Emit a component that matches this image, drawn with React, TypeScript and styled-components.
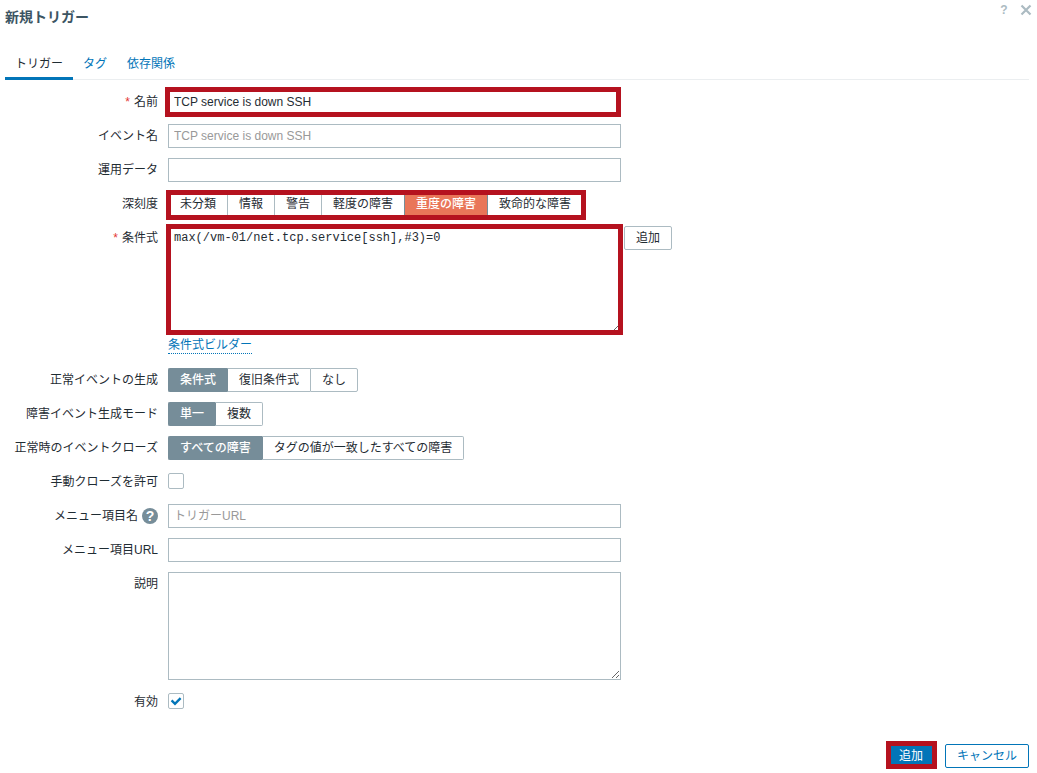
import React, { useState } from 'react';
import styled, { createGlobalStyle, css } from 'styled-components';

const color = {
  text: '#1f2c33',
  title: '#3c5563',
  link: '#0275b8',
  border: '#acbbc2',
  slate: '#768d99',
  high: '#e97659',
  marker: '#b5121f',
  muted: '#999999',
};

const GlobalStyle = createGlobalStyle`
  *, *::before, *::after { box-sizing: border-box; }
  body {
    margin: 0;
    background: #ffffff;
    color: ${color.text};
    font: 12px/24px "Liberation Sans", "Noto Sans CJK JP", sans-serif;
  }
  button, input, textarea { font: inherit; color: inherit; }
`;

const Dialog = styled.form`
  display: flex;
  flex-direction: column;
  min-height: 100vh;
  padding: 0 8px 5px 5px;
`;

const Header = styled.header`
  display: flex;
  justify-content: space-between;
  align-items: flex-start;
  height: 48px;
`;

const Title = styled.h1`
  margin: 5px 0 0;
  font-size: 14px;
  line-height: 24px;
  font-weight: bold;
  color: ${color.title};
`;

const HeaderActions = styled.div`
  display: flex;
  gap: 10px;
  padding-top: 4px;
  margin-right: -3px;
`;

const IconButton = styled.button`
  display: flex;
  align-items: center;
  justify-content: center;
  width: 12px;
  height: 12px;
  padding: 0;
  border: 0;
  background: none;
  font-size: 12px;
  line-height: 12px;
  font-weight: bold;
  color: ${color.border};
`;

const TabList = styled.nav`
  display: flex;
  height: 32px;
  border-bottom: 1px solid #ebeef0;
`;

const Tab = styled.a<{ $active?: boolean }>`
  height: 32px;
  padding: 4px 10px 0;
  text-decoration: none;
  color: ${(p) => (p.$active ? color.text : color.link)};
  border-bottom: 3px solid ${(p) => (p.$active ? color.link : 'transparent')};
`;

const Fields = styled.div`
  display: grid;
  grid-template-columns: 153px minmax(0, 1fr);
  gap: 10px;
  padding-top: 10px;
`;

const LabelCell = styled.div`
  display: flex;
  justify-content: flex-end;
  align-items: center;
  gap: 4px;
  height: 24px;
  white-space: nowrap;
`;

const Required = styled.span`
  color: #e33734;
`;

const Control = styled.div`
  display: flex;
  align-items: flex-start;
  gap: 3px;
  min-width: 0;
`;

const HelpBadge = styled.button`
  width: 16px;
  height: 16px;
  padding: 0;
  border: 0;
  border-radius: 50%;
  background: ${color.slate};
  color: #ffffff;
  font-size: 14px;
  line-height: 16px;
  font-weight: bold;
`;

const Marker = styled.div<{ $edges: string; $grow?: boolean }>`
  position: relative;
  display: flex;
  ${(p) => p.$grow && css`flex: 0 1 453px;`}
  &::after {
    content: '';
    position: absolute;
    inset: ${(p) => p.$edges};
    border: 5px solid ${color.marker};
    pointer-events: none;
  }
`;

const field = css`
  display: block;
  width: 100%;
  max-width: 453px;
  margin: 0;
  border: 1px solid ${color.border};
  border-radius: 0;
  background: #ffffff;
  outline: 0;
  &::placeholder { color: ${color.muted}; opacity: 1; }
`;

const TextInput = styled.input`
  ${field}
  height: 24px;
  padding: 0 5px;
`;

const TextArea = styled.textarea<{ $mono?: boolean }>`
  ${field}
  height: 108px;
  padding: 4px 5px;
  line-height: 14px;
  ${(p) => p.$mono && css`font-family: "Liberation Mono", monospace;`}
`;

const Button = styled.button<{ $kind?: 'primary' | 'outline' }>`
  height: 24px;
  padding: 0 11px;
  line-height: 22px;
  border-radius: 2px;
  white-space: nowrap;
  border: 1px solid ${(p) => (p.$kind ? color.link : color.border)};
  background: ${(p) => (p.$kind === 'primary' ? color.link : '#ffffff')};
  color: ${(p) =>
    p.$kind === 'primary' ? '#ffffff' : p.$kind ? color.link : color.text};
`;

const BuilderLink = styled.a`
  display: inline-block;
  margin: 3px 0 4px;
  line-height: 16px;
  color: ${color.link};
  text-decoration: none;
  border-bottom: 1px dotted ${color.link};
`;

const Stack = styled.div`
  min-width: 0;
`;

const Segments = styled.div`
  display: flex;
`;

const Segment = styled.label<{ $accent: string }>`
  position: relative;
  height: 24px;
  padding: 0 11px;
  line-height: 22px;
  white-space: nowrap;
  border: 1px solid ${color.border};
  border-right-width: 0;
  &:first-child { border-radius: 2px 0 0 2px; }
  &:last-child { border-radius: 0 2px 2px 0; border-right-width: 1px; }
  &:has(input:checked) {
    background: ${(p) => p.$accent};
    border-color: ${color.slate};
    color: #ffffff;
    font-weight: 500;
  }
  &:has(input:checked) + & { border-left-color: ${(p) => p.$accent}; }
`;

const SegmentRadio = styled.input`
  position: absolute;
  inset: 0;
  margin: 0;
  opacity: 0;
`;

const CheckWrap = styled.span`
  position: relative;
  display: block;
  width: 16px;
  height: 16px;
  margin-top: 3px;
  svg {
    position: absolute;
    inset: 0;
    pointer-events: none;
  }
`;

const CheckInput = styled.input`
  appearance: none;
  display: block;
  width: 16px;
  height: 16px;
  margin: 0;
  border: 1px solid ${color.border};
  border-radius: 2px;
  background: #ffffff;
`;

const Footer = styled.footer`
  display: flex;
  justify-content: flex-end;
  gap: 10px;
  margin-top: auto;
  padding-top: 30px;
`;

function Label({ id, text, required, help }: { id: string; text: string; required?: boolean; help?: boolean }) {
  return (
    <LabelCell>
      {required && <Required>*</Required>}
      <label htmlFor={id} id={`${id}-label`}>{text}</label>
      {help && <HelpBadge type="button" aria-label="ヘルプ">?</HelpBadge>}
    </LabelCell>
  );
}

function RadioSegments({ id, options, initial, accent = color.slate }: {
  id: string; options: string[]; initial: number; accent?: string;
}) {
  const [selected, setSelected] = useState(initial);
  return (
    <Segments role="radiogroup" aria-labelledby={`${id}-label`}>
      {options.map((option, i) => (
        <Segment key={option} $accent={accent}>
          <SegmentRadio
            type="radio"
            id={i === 0 ? id : undefined}
            name={id}
            checked={selected === i}
            onChange={() => setSelected(i)}
          />
          {option}
        </Segment>
      ))}
    </Segments>
  );
}

function Checkbox({ id, initial = false }: { id: string; initial?: boolean }) {
  const [checked, setChecked] = useState(initial);
  return (
    <CheckWrap>
      <CheckInput id={id} type="checkbox" checked={checked} onChange={() => setChecked(!checked)} />
      {checked && (
        <svg width="16" height="16" viewBox="0 0 16 16" fill="none" stroke={color.link} strokeWidth="2.4">
          <path d="M3.6 7.4 7 10.8 12.6 5.2" />
        </svg>
      )}
    </CheckWrap>
  );
}

export default function App() {
  return (
    <>
      <GlobalStyle />
      <Dialog onSubmit={(e) => e.preventDefault()}>
        <Header>
          <Title>新規トリガー</Title>
          <HeaderActions>
            <IconButton type="button" aria-label="ヘルプ">?</IconButton>
            <IconButton type="button" aria-label="閉じる">
              <svg width="12" height="12" viewBox="0 0 12 12" stroke="currentColor" strokeWidth="2.2">
                <path d="M1.5 1.5 10.5 10.5M10.5 1.5 1.5 10.5" />
              </svg>
            </IconButton>
          </HeaderActions>
        </Header>

        <TabList>
          <Tab href="#trigger" $active>トリガー</Tab>
          <Tab href="#tags">タグ</Tab>
          <Tab href="#dependencies">依存関係</Tab>
        </TabList>

        <Fields>
          <Label id="name" text="名前" required />
          <Control>
            <Marker $grow $edges="-3px 0 -3px -3px">
              <TextInput id="name" defaultValue="TCP service is down SSH" />
            </Marker>
          </Control>

          <Label id="event-name" text="イベント名" />
          <Control><TextInput id="event-name" placeholder="TCP service is down SSH" /></Control>

          <Label id="opdata" text="運用データ" />
          <Control><TextInput id="opdata" /></Control>

          <Label id="severity" text="深刻度" />
          <Control>
            <Marker $edges="-2px -3px -4px -2px">
              <RadioSegments
                id="severity"
                options={['未分類', '情報', '警告', '軽度の障害', '重度の障害', '致命的な障害']}
                initial={4}
                accent={color.high}
              />
            </Marker>
          </Control>

          <Label id="expression" text="条件式" required />
          <Stack>
            <Control>
              <Marker $grow $edges="-2px -2px -1px -2px">
                <TextArea id="expression" $mono spellCheck={false} defaultValue="max(/vm-01/net.tcp.service[ssh],#3)=0" />
              </Marker>
              <Button type="button">追加</Button>
            </Control>
            <Control><BuilderLink href="#builder">条件式ビルダー</BuilderLink></Control>
          </Stack>

          <Label id="recovery" text="正常イベントの生成" />
          <Control><RadioSegments id="recovery" options={['条件式', '復旧条件式', 'なし']} initial={0} /></Control>

          <Label id="mode" text="障害イベント生成モード" />
          <Control><RadioSegments id="mode" options={['単一', '複数']} initial={0} /></Control>

          <Label id="correlation" text="正常時のイベントクローズ" />
          <Control>
            <RadioSegments id="correlation" options={['すべての障害', 'タグの値が一致したすべての障害']} initial={0} />
          </Control>

          <Label id="manual-close" text="手動クローズを許可" />
          <Control><Checkbox id="manual-close" /></Control>

          <Label id="url-name" text="メニュー項目名" help />
          <Control><TextInput id="url-name" placeholder="トリガーURL" /></Control>

          <Label id="url" text="メニュー項目URL" />
          <Control><TextInput id="url" /></Control>

          <Label id="description" text="説明" />
          <Control><TextArea id="description" /></Control>

          <Label id="enabled" text="有効" />
          <Control><Checkbox id="enabled" initial /></Control>
        </Fields>

        <Footer>
          <Marker $edges="-3px -2px -1px -1px">
            <Button type="submit" $kind="primary">追加</Button>
          </Marker>
          <Button type="button" $kind="outline">キャンセル</Button>
        </Footer>
      </Dialog>
    </>
  );
}
